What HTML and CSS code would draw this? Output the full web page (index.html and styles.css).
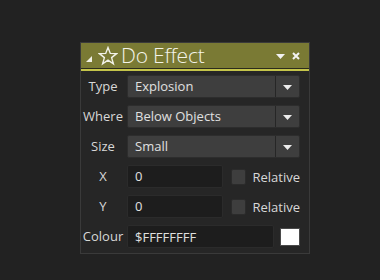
FILE: index.html
```html
<!DOCTYPE html>
<html>
<head>
<meta charset="utf-8">
<link rel="stylesheet" href="styles.css">
</head>
<body>
<div class="panel">
  <div class="header">
    <span class="corner"></span>
    <svg class="star" width="20" height="20" viewBox="0 0 20 20"><polygon points="10,1.5 12.3,7.4 18.6,7.6 13.6,11.6 15.4,17.8 10,14.2 4.6,17.8 6.4,11.6 1.4,7.6 7.7,7.4" fill="none" stroke="#f2f2e8" stroke-width="1.4" stroke-linejoin="miter"/></svg>
    <span class="title">Do Effect</span>
    <svg class="hdr-arrow" width="9" height="5" viewBox="0 0 9 5"><polygon points="0,0 9,0 4.5,5" fill="#f2f2f2"/></svg>
    <svg class="hdr-close" width="8" height="8" viewBox="0 0 8 8"><path d="M1 1 L7 7 M7 1 L1 7" stroke="#f2f2f2" stroke-width="2"/></svg>
  </div>
  <div class="rule"></div>
  <div class="body">
    <div class="label">Type</div>
    <div class="select wide"><span class="val">Explosion</span><span class="btn"><svg width="9" height="5" viewBox="0 0 9 5"><polygon points="0,0 9,0 4.5,5" fill="#ececec"/></svg></span></div>

    <div class="label">Where</div>
    <div class="select wide"><span class="val">Below Objects</span><span class="btn"><svg width="9" height="5" viewBox="0 0 9 5"><polygon points="0,0 9,0 4.5,5" fill="#ececec"/></svg></span></div>

    <div class="label">Size</div>
    <div class="select wide"><span class="val">Small</span><span class="btn"><svg width="9" height="5" viewBox="0 0 9 5"><polygon points="0,0 9,0 4.5,5" fill="#ececec"/></svg></span></div>

    <div class="label">X</div>
    <div class="line"><div class="input num">0</div><span class="check"></span><span class="rel">Relative</span></div>

    <div class="label">Y</div>
    <div class="line"><div class="input num">0</div><span class="check"></span><span class="rel">Relative</span></div>

    <div class="label">Colour</div>
    <div class="line"><div class="input col">$FFFFFFFF</div><span class="swatch"></span></div>
  </div>
</div>
</body>
</html>
```
FILE: styles.css
```css
html, body {
  margin: 0;
  padding: 0;
  background: #222222;
  width: 380px;
  height: 280px;
  overflow: hidden;
}
body {
  font-family: "Open Sans", "Noto Sans", sans-serif;
  color: #dcdcdc;
}
.panel {
  margin: 42px 0 0 80px;
  width: 228px;
  height: 210px;
  border: 1px solid #3a3a3a;
  background: #262626;
}
.header {
  height: 25px;
  background: #7a7a34;
  display: flex;
  align-items: center;
  border-bottom: 1px solid #2c2c1c;
}
.corner {
  width: 0;
  height: 0;
  border-left: 6px solid transparent;
  border-bottom: 6px solid #f0f0e6;
  margin: 7px 0 0 5px;
}
.star {
  margin-left: 6px;
  margin-top: 1px;
}
.title {
  font-size: 21px;
  font-weight: 300;
  color: #f4f4ea;
  margin-left: 3px;
  line-height: 25px;
  letter-spacing: -0.2px;
  flex: 1;
}
.hdr-arrow {
  margin-top: 2px;
  margin-right: 7px;
}
.hdr-close {
  margin-right: 9px;
  margin-top: 1px;
}
.rule {
  height: 2px;
  background: #c4c44a;
}
.body {
  display: grid;
  grid-template-columns: 44px 173px;
  column-gap: 2px;
  row-gap: 7px;
  padding: 4px 0 0 0;
  grid-auto-rows: 23px;
}
.label {
  font-size: 13px;
  text-align: center;
  line-height: 23px;
  color: #d8d8d8;
}
.select {
  display: flex;
  background: #3e3e3e;
  border: 1px solid #2d2d2d;
  border-radius: 2px;
  box-sizing: border-box;
  height: 23px;
}
.val {
  flex: 1;
  font-size: 13px;
  line-height: 21px;
  padding-left: 7px;
  color: #e0e0e0;
}
.btn {
  width: 23px;
  border-left: 1px solid #262626;
  display: flex;
  align-items: center;
  justify-content: center;
}
.btn svg {
  margin-top: 1px;
}
.line {
  display: flex;
  align-items: center;
}
.input {
  height: 23px;
  box-sizing: border-box;
  background: #1d1d1d;
  border: 1px solid #2b2b2b;
  border-radius: 2px;
  font-size: 13px;
  line-height: 21px;
  padding-left: 7px;
  color: #e0e0e0;
}
.num {
  width: 100px;
}
.col {
  width: 147px;
  line-height: 22px;
}
.check {
  width: 16px;
  height: 16px;
  box-sizing: border-box;
  background: #3e3e3e;
  border: 1px solid #2b2b2b;
  border-radius: 2px;
  margin-left: 8px;
}
.rel {
  font-size: 13px;
  margin-left: 6px;
  color: #d8d8d8;
}
.swatch {
  width: 20px;
  height: 18px;
  box-sizing: border-box;
  background: #ffffff;
  border: 1px solid #4a4a4a;
  margin-left: 6px;
}
```
